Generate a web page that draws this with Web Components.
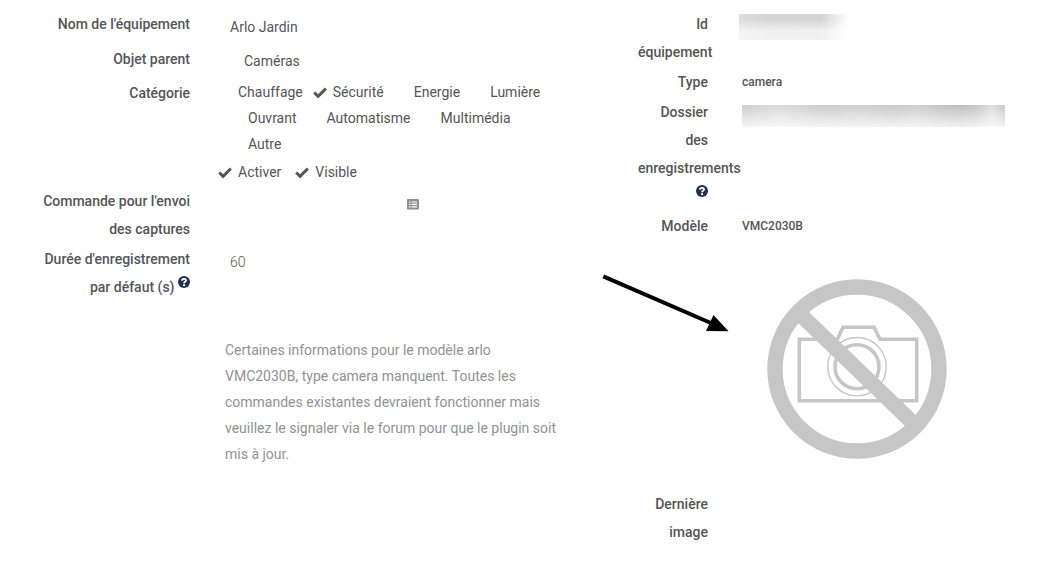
<!DOCTYPE html>
<html lang="fr">
<head>
<meta charset="utf-8">
<title>Arlo Jardin</title>
<style>
  body {
    background-color: white;
    color: #555;
    font-family: Roboto, "Noto Sans", sans-serif;
    font-size: 14px;
    line-height: 28px;
    margin: 0;
  }
</style>
</head>
<body>
<equipment-page>
  <settings-form slot="settings">
    <form-row>
      <label slot="label" for="name">Nom de l'équipement</label>
      <input id="name" type="text" value="Arlo Jardin">
    </form-row>
    <form-row>
      <label slot="label" for="parent">Objet parent</label>
      <select id="parent"><option>Caméras</option></select>
    </form-row>
    <form-row>
      <span slot="label">Catégorie</span>
      <check-list>
        <check-option>Chauffage</check-option>
        <check-option checked>Sécurité</check-option>
        <check-option>Energie</check-option>
        <check-option>Lumière</check-option>
        <check-option>Ouvrant</check-option>
        <check-option>Automatisme</check-option>
        <check-option>Multimédia</check-option>
        <check-option>Autre</check-option>
      </check-list>
    </form-row>
    <form-row>
      <check-list class="spaced">
        <check-option checked>Activer</check-option>
        <check-option checked>Visible</check-option>
      </check-list>
    </form-row>
    <form-row>
      <span slot="label">Commande pour l'envoi des captures</span>
      <command-picker></command-picker>
    </form-row>
    <form-row>
      <label slot="label" for="duration">Durée d'enregistrement par défaut (s) <help-tip></help-tip></label>
      <input id="duration" type="text" inputmode="numeric" value="60" class="light">
    </form-row>
    <form-row>
      <info-note>Certaines informations pour le modèle arlo VMC2030B, type camera manquent. Toutes les commandes existantes devraient fonctionner mais veuillez le signaler via le forum pour que le plugin soit mis à jour.</info-note>
    </form-row>
  </settings-form>

  <settings-form slot="details" class="narrow">
    <form-row>
      <span slot="label">Id équipement</span>
      <hidden-value class="short"></hidden-value>
    </form-row>
    <form-row>
      <span slot="label">Type</span>
      <info-value>camera</info-value>
    </form-row>
    <form-row>
      <span slot="label">Dossier des enregistrements <help-tip></help-tip></span>
      <info-value><hidden-value></hidden-value></info-value>
    </form-row>
    <form-row>
      <span slot="label">Modèle</span>
      <info-value>VMC2030B</info-value>
    </form-row>
    <form-row>
      <info-value><no-picture></no-picture></info-value>
    </form-row>
    <form-row>
      <span slot="label">Dernière image</span>
    </form-row>
  </settings-form>
</equipment-page>

<script>
// shared helper: opens the shadow root and fills it
class BaseElement extends HTMLElement {
  constructor() {
    super();
    this.attachShadow({mode: 'open'}).innerHTML = this.render();
  }
}

class EquipmentPage extends BaseElement {
  render() {
    return `
      <style>
      :host {
        display: grid;
        grid-template-columns: 4fr 3fr;
        padding: 10px 0;
      }
      </style>
      <slot name="settings"></slot>
      <slot name="details"></slot>
      `;
  }
}

class SettingsForm extends BaseElement {
  render() {
    return `
      <style>
      :host {
        --label-width: 160px;
        --label-gap: 28px;
        display: block;
        padding-left: 30px;
        padding-right: 32px;
      }

      :host(.narrow) {
        --label-width: 70px;
        --label-gap: 31px;
        padding-left: 38px;
      }

      form {
        display: flex;
        flex-direction: column;
        gap: 2px;
      }
      </style>
      <form onsubmit="return false"><slot></slot></form>
      `;
  }
}

class FormRow extends BaseElement {
  render() {
    return `
      <style>
      :host {
        column-gap: var(--label-gap);
        display: grid;
        grid-template-columns: var(--label-width) minmax(0, 1fr);
      }

      .label {
        font-weight: 500;
        text-align: right;
      }

      ::slotted(input), ::slotted(select) {
        appearance: none;
        background: none;
        border: none;
        box-sizing: border-box;
        color: inherit;
        display: block;
        font: inherit;
        height: 33px;
        line-height: 32px;
        outline: none;
        padding: 0 12px;
        width: 100%;
      }

      ::slotted(select) {
        height: 32px;
        padding: 0 26px;
      }

      ::slotted(.light) {
        font-weight: 300;
      }
      </style>
      <div class="label"><slot name="label"></slot></div>
      <div><slot></slot></div>
      `;
  }
}

class CheckList extends BaseElement {
  render() {
    return `
      <style>
      :host {
        display: flex;
        flex-wrap: wrap;
        line-height: 26px;
      }

      :host(.spaced) {
        column-gap: 4px;
      }

      ::slotted(:not(:first-child)) {
        margin-left: 10px;
      }
      </style>
      <slot></slot>
      `;
  }
}

class CheckOption extends BaseElement {
  render() {
    return `
      <style>
      :host {
        display: block;
      }

      label {
        align-items: center;
        cursor: pointer;
        display: grid;
        grid-template-columns: 14px auto;
        column-gap: 6px;
      }

      input, svg {
        grid-area: 1 / 1;
        height: 14px;
        margin: 0;
        width: 14px;
      }

      input {
        appearance: none;
      }

      svg {
        fill: none;
        pointer-events: none;
        stroke: #555;
        stroke-width: 3;
        visibility: hidden;
      }

      input:checked + svg {
        visibility: visible;
      }
      </style>
      <label>
        <input type="checkbox" ${this.hasAttribute('checked') ? 'checked' : ''}>
        <svg viewBox="0 0 14 14" aria-hidden="true"><path d="M1.2 7.5 5.1 11.3 12.9 3.5"/></svg>
        <span><slot></slot></span>
      </label>
      `;
  }
}

class CommandPicker extends BaseElement {
  render() {
    return `
      <style>
      :host {
        display: flex;
        height: 33px;
      }

      input {
        background: none;
        border: none;
        box-sizing: border-box;
        color: inherit;
        flex: 0 1 180px;
        font: inherit;
        min-width: 0;
        outline: none;
        padding: 0 12px;
      }

      button {
        align-items: center;
        background: none;
        border: none;
        cursor: pointer;
        display: flex;
        padding: 0 9px;
      }
      </style>
      <input type="text" aria-label="Commande pour l'envoi des captures">
      <button type="button" aria-label="Choisir une commande">
        <svg width="12" height="12" viewBox="0 0 12 12">
          <rect x="0" y="1" width="12" height="10.6" rx="1" fill="#92928c"/>
          <path d="M2 4h1.5M2 6.4h1.5M2 8.8h1.5M4.5 4H10M4.5 6.4H10M4.5 8.8H10" stroke="white" stroke-width="1.2"/>
        </svg>
      </button>
      `;
  }
}

class HelpTip extends BaseElement {
  render() {
    return `
      <style>
      :host {
        display: inline-block;
        height: 12px;
        line-height: 0;
        vertical-align: 4px;
        width: 12px;
      }
      </style>
      <svg width="12" height="12" viewBox="0 0 12 12" aria-hidden="true">
        <circle cx="6" cy="6" r="6" fill="#22304f"/>
        <path d="M3.9 4.6C4.1 2.3 8 2.3 8 4.6 8 5.9 6.1 5.8 6.1 7.3" fill="none" stroke="white" stroke-width="1.9"/>
        <circle cx="6.1" cy="9.2" r="1.1" fill="white"/>
      </svg>
      `;
  }
}

class InfoNote extends BaseElement {
  render() {
    return `
      <style>
      :host {
        color: #929292;
        display: block;
        line-height: 26px;
        padding: 34px 6px 0 7px;
      }
      </style>
      <slot></slot>
      `;
  }
}

class InfoValue extends BaseElement {
  render() {
    return `
      <style>
      :host {
        display: block;
        font-size: 12px;
        font-weight: 500;
        padding-left: 3px;
      }
      </style>
      <slot></slot>
      `;
  }
}

// value masked by a grey smear
class HiddenValue extends BaseElement {
  render() {
    return `
      <style>
      :host {
        background:
          linear-gradient(to bottom, transparent, rgb(255,255,255,0.4) 50%, rgb(255,255,255,0.8)),
          linear-gradient(to right, #cdcdcd, #dadada 14%, #cbcbcb 32%, #d0d0d0 45%, #c8c8c8 57%, #cecece 66%, #bdbdbd 82%, #c8c8c8 90%, #dedede 95%, #c8c8c8);
        display: block;
        height: 22px;
        margin-top: 7px;
        max-width: 263px;
      }

      :host(.short) {
        background:
          linear-gradient(to bottom, transparent 20%, rgb(255,255,255,0.65) 65%, rgb(255,255,255,0.7)),
          linear-gradient(to right, #dedede, #d5d5d5 25%, #d3d3d3 75%, #efefef 90%, white);
        height: 26px;
        margin-top: 4px;
        max-width: 110px;
      }
      </style>
      `;
  }
}

class NoPicture extends BaseElement {
  render() {
    return `
      <style>
      :host {
        display: block;
        position: relative;
      }

      svg {
        display: block;
        fill: none;
      }

      .camera {
        max-width: 100%;
        stroke: #c6c6c6;
      }

      /* the arrow lies over the gap between the two forms */
      .arrow {
        left: -142px;
        position: absolute;
        top: 28px;
      }
      </style>
      <svg class="camera" width="230" height="246" viewBox="0 0 230 246" role="img" aria-label="Aucune image">
        <circle cx="115" cy="127" r="82" stroke-width="15.4"/>
        <path d="M57.3 97.3H95.5L101 85.3H132L138 97.3H174.7V158.7H57.3Z" stroke-width="3.6"/>
        <circle cx="115" cy="124.7" r="29.2" fill="white" stroke-width="1.4"/>
        <circle cx="115" cy="124.7" r="22" stroke-width="3.6"/>
        <path d="M59 73 171 181" stroke-width="15.4"/>
      </svg>
      <svg class="arrow" width="130" height="64" viewBox="0 0 130 64" aria-hidden="true">
        <path d="M3.3 6.3 112 53.5" stroke="black" stroke-width="4"/>
        <path d="M113.5 45 106 61 128.5 61.3Z" fill="black"/>
      </svg>
      `;
  }
}

customElements.define('equipment-page', EquipmentPage);
customElements.define('settings-form', SettingsForm);
customElements.define('form-row', FormRow);
customElements.define('check-list', CheckList);
customElements.define('check-option', CheckOption);
customElements.define('command-picker', CommandPicker);
customElements.define('help-tip', HelpTip);
customElements.define('info-note', InfoNote);
customElements.define('info-value', InfoValue);
customElements.define('hidden-value', HiddenValue);
customElements.define('no-picture', NoPicture);
</script>
</body>
</html>
